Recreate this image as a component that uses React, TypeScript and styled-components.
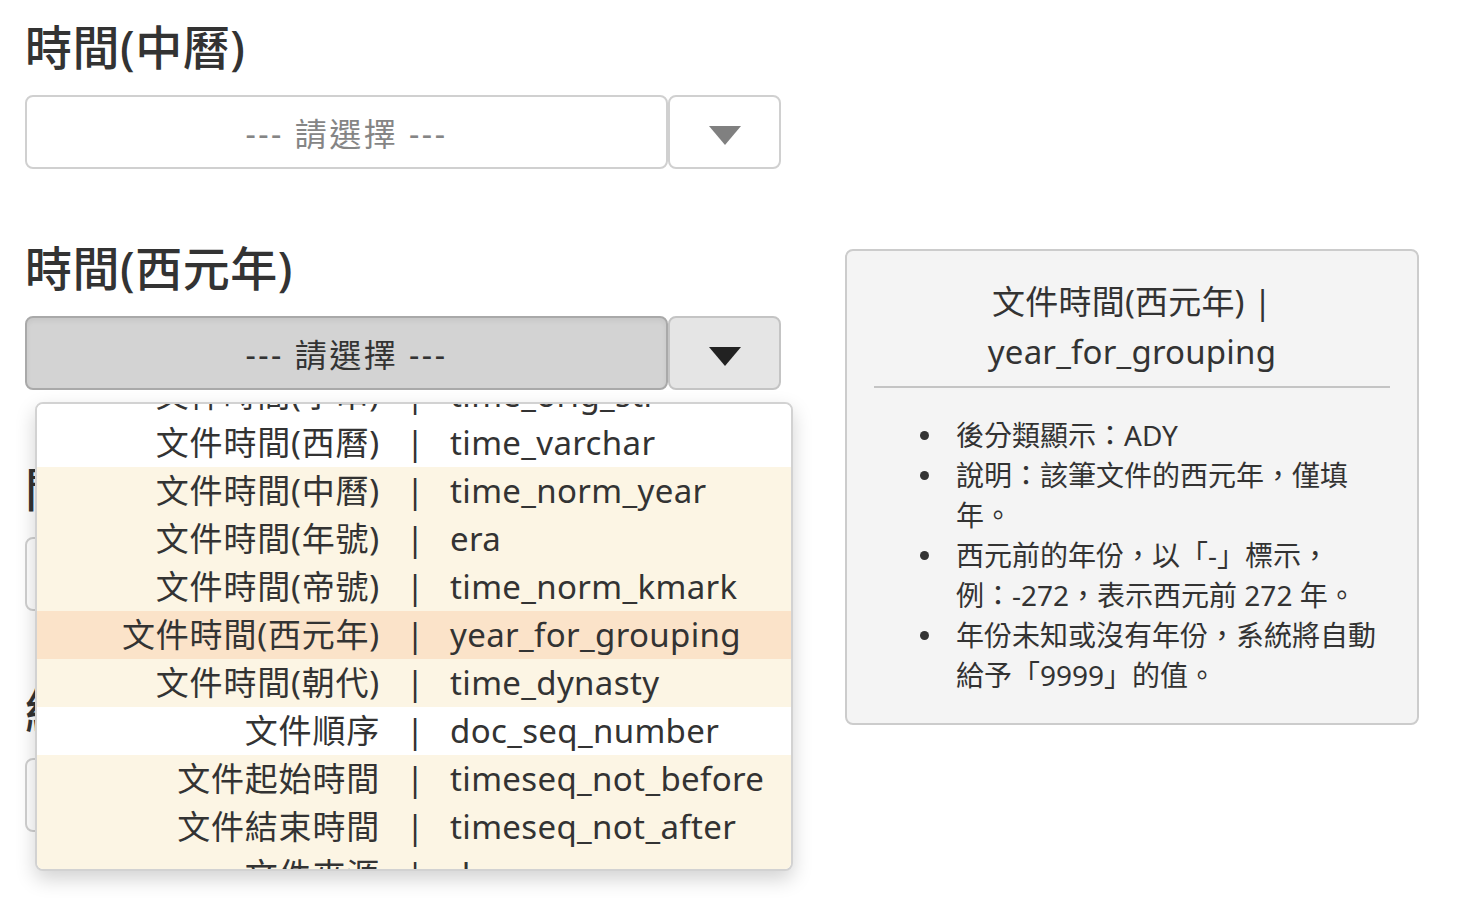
import React, { useLayoutEffect, useRef } from "react";
import styled, { createGlobalStyle } from "styled-components";

const GlobalStyle = createGlobalStyle`
  html, body { margin: 0; padding: 0; background: #ffffff; }
  body {
    font-family: "Noto Sans", "Noto Sans CJK TC", sans-serif;
    color: #333333;
  }
  * { box-sizing: border-box; }
`;

const Page = styled.div`
  display: flex;
  align-items: flex-start;
  gap: 64px;
  padding: 20px 0 0 25px;
  width: 1459px;
  height: 904px;
  overflow: hidden;
`;

const LeftColumn = styled.div`
  flex: none;
  width: 756px;
`;

const Section = styled.section`
  margin-bottom: 72px;
`;

const Heading = styled.h2`
  margin: 0 0 20px;
  font-size: 47px;
  line-height: 55px;
  font-weight: 500;
  color: #333333;
  white-space: nowrap;
  letter-spacing: 0.5px;
`;

const SelectGroup = styled.div`
  position: relative;
  display: flex;
  height: 74px;
`;

const SelectMain = styled.div<{ $active?: boolean }>`
  flex: none;
  width: 643px;
  display: flex;
  align-items: center;
  justify-content: center;
  border: 2px solid ${(p) => (p.$active ? "#a9a9a9" : "#d0d0d0")};
  border-radius: 8px;
  background: ${(p) => (p.$active ? "#d3d3d3" : "#ffffff")};
  box-shadow: ${(p) => (p.$active ? "inset 0 3px 5px rgba(0,0,0,0.06)" : "none")};
  color: ${(p) => (p.$active ? "#333333" : "#858585")};
  font-size: 32px;
  letter-spacing: 2.5px;
  white-space: nowrap;
`;

const SelectButton = styled.div<{ $active?: boolean }>`
  flex: none;
  width: 113px;
  display: flex;
  align-items: center;
  justify-content: center;
  border: 2px solid ${(p) => (p.$active ? "#c4c4c4" : "#d0d0d0")};
  border-radius: 8px;
  background: ${(p) => (p.$active ? "#e5e5e5" : "#ffffff")};
`;

const Caret = styled.span<{ $active?: boolean }>`
  width: 0;
  height: 0;
  margin-top: 6px;
  border-left: 16px solid transparent;
  border-right: 16px solid transparent;
  border-top: 19px solid ${(p) => (p.$active ? "#222222" : "#808080")};
`;

const Dropdown = styled.div`
  position: absolute;
  top: 86px;
  left: 10px;
  z-index: 10;
  width: 758px;
  height: 469px;
  overflow: hidden;
  background: #ffffff;
  border: 2px solid #d2d2d2;
  border-radius: 8px;
  box-shadow: 0 8px 20px rgba(0, 0, 0, 0.18);
`;

type Tone = "plain" | "cream" | "active";

const toneColor: Record<Tone, string> = {
  plain: "#ffffff",
  cream: "#fcf5e4",
  active: "#fbe3c9",
};

const OptionRow = styled.div<{ $tone: Tone }>`
  display: grid;
  grid-template-columns: 343px 70px 1fr;
  align-items: center;
  height: 48px;
  background: ${(p) => toneColor[p.$tone]};
  font-size: 33px;
  line-height: 48px;
  color: #333333;
  white-space: nowrap;
`;

const OptionLabel = styled.span`
  justify-self: end;
  letter-spacing: 0.8px;
`;

const OptionSep = styled.span`
  justify-self: center;
`;

const OptionValue = styled.span`
  justify-self: start;
  letter-spacing: 0.35px;
`;

const InfoPanel = styled.aside`
  flex: none;
  margin-top: 229px;
  width: 574px;
  background: #f4f4f4;
  border: 2px solid #cccccc;
  border-radius: 8px;
  padding: 26px 27px 28px;
`;

const PanelTitle = styled.div`
  text-align: center;
  font-size: 33px;
  line-height: 50px;
  letter-spacing: 0.2px;
  padding-bottom: 9px;
  border-bottom: 2px solid #c4c4c4;
  color: #333333;
`;

const NoteList = styled.ul`
  margin: 27px 0 0;
  padding: 0 0 0 46px;
  font-size: 28px;
  line-height: 40px;
  color: #333333;
  list-style: none;
`;

const NoteItem = styled.li`
  display: flex;
  align-items: flex-start;
  white-space: nowrap;

  &::before {
    content: "";
    flex: none;
    width: 9px;
    height: 9px;
    margin: 16px 27px 0 0;
    border-radius: 50%;
    background: #333333;
  }
`;

const NoteText = styled.span`
  display: block;
`;

const fields: { label: string; value: string; tone: Tone }[] = [
  { label: "文件時間(字串)", value: "time_orig_str", tone: "plain" },
  { label: "文件時間(西曆)", value: "time_varchar", tone: "plain" },
  { label: "文件時間(中曆)", value: "time_norm_year", tone: "cream" },
  { label: "文件時間(年號)", value: "era", tone: "cream" },
  { label: "文件時間(帝號)", value: "time_norm_kmark", tone: "cream" },
  { label: "文件時間(西元年)", value: "year_for_grouping", tone: "active" },
  { label: "文件時間(朝代)", value: "time_dynasty", tone: "cream" },
  { label: "文件順序", value: "doc_seq_number", tone: "plain" },
  { label: "文件起始時間", value: "timeseq_not_before", tone: "cream" },
  { label: "文件結束時間", value: "timeseq_not_after", tone: "cream" },
  { label: "文件來源", value: "doc_source", tone: "cream" },
  { label: "文件類型", value: "doc_type", tone: "plain" },
];

function FieldDropdown() {
  const ref = useRef<HTMLDivElement>(null);
  useLayoutEffect(() => {
    if (ref.current) ref.current.scrollTop = 33;
  }, []);
  return (
    <Dropdown ref={ref}>
      {fields.map((f) => (
        <OptionRow key={f.value} $tone={f.tone}>
          <OptionLabel>{f.label}</OptionLabel>
          <OptionSep>|</OptionSep>
          <OptionValue>{f.value}</OptionValue>
        </OptionRow>
      ))}
    </Dropdown>
  );
}

function SelectField({ active, open }: { active?: boolean; open?: boolean }) {
  return (
    <SelectGroup>
      <SelectMain $active={active}>--- 請選擇 ---</SelectMain>
      <SelectButton $active={active}>
        <Caret $active={active} />
      </SelectButton>
      {open && <FieldDropdown />}
    </SelectGroup>
  );
}

export default function App() {
  return (
    <>
      <GlobalStyle />
      <Page>
        <LeftColumn>
          <Section>
            <Heading>時間(中曆)</Heading>
            <SelectField />
          </Section>
          <Section>
            <Heading>時間(西元年)</Heading>
            <SelectField active open />
          </Section>
          <Section>
            <Heading>開始時間</Heading>
            <SelectField />
          </Section>
          <Section>
            <Heading>結束時間</Heading>
            <SelectField />
          </Section>
        </LeftColumn>
        <InfoPanel>
          <PanelTitle>
            文件時間(西元年) |<br />
            year_for_grouping
          </PanelTitle>
          <NoteList>
            <NoteItem>
              <NoteText>後分類顯示：ADY</NoteText>
            </NoteItem>
            <NoteItem>
              <NoteText>
                說明：該筆文件的西元年，僅填
                <br />
                年。
              </NoteText>
            </NoteItem>
            <NoteItem>
              <NoteText>
                西元前的年份，以「-」標示，
                <br />
                例：-272，表示西元前 272 年。
              </NoteText>
            </NoteItem>
            <NoteItem>
              <NoteText>
                年份未知或沒有年份，系統將自動
                <br />
                給予「9999」的值。
              </NoteText>
            </NoteItem>
          </NoteList>
        </InfoPanel>
      </Page>
    </>
  );
}
